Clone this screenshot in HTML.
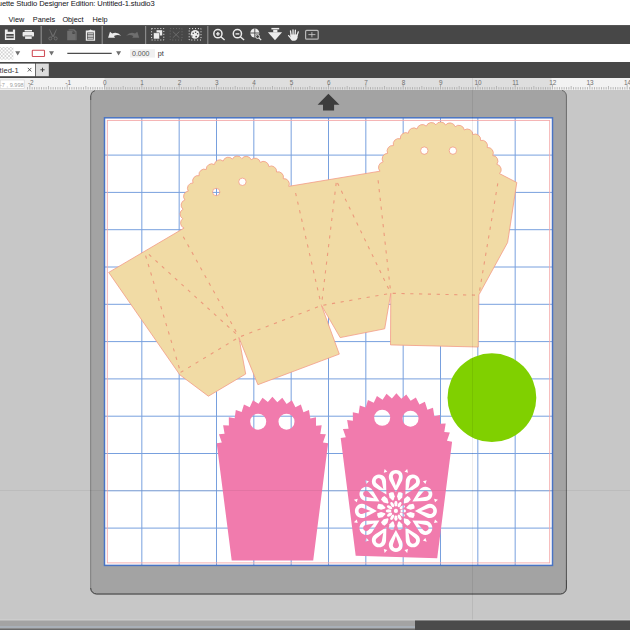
<!DOCTYPE html>
<html><head><meta charset="utf-8">
<style>
html,body{margin:0;padding:0;}
body{width:630px;height:630px;overflow:hidden;position:relative;background:#c7c7c7;font-family:"Liberation Sans",sans-serif;}
.a{position:absolute;}
#title{left:0;top:0;width:630px;height:12px;background:#fff;}
#title span{position:absolute;left:-2.2px;top:-1.5px;font-size:7.6px;letter-spacing:-0.1px;color:#141420;white-space:nowrap;}
#menu{left:0;top:12px;width:630px;height:13px;background:#fff;}
#menu span{position:absolute;top:2.6px;font-size:7.3px;color:#141420;white-space:nowrap;}
#tb{left:0;top:25px;width:630px;height:19px;background:#474747;}
#props{left:0;top:44px;width:630px;height:18px;background:#fff;}
#tabs{left:0;top:62px;width:630px;height:16px;background:#474747;}
#ruler{left:0;top:78px;width:630px;height:12px;background:#f2f2f2;}
#bottom{left:0;top:620px;width:630px;height:10px;background:#4b4b4b;}
svg{position:absolute;left:0;top:0;}
</style></head><body>
<div class="a" id="title"><span>uette Studio Designer Edition: Untitled-1.studio3</span></div>
<div class="a" id="menu"><span style="left:8.6px">View</span><span style="left:32.8px">Panels</span><span style="left:62.4px">Object</span><span style="left:92.6px">Help</span></div>
<div class="a" id="tb"></div>
<div class="a" id="props"></div>
<div class="a" id="tabs"></div>
<div class="a" id="ruler"></div>
<div class="a" id="bottom"></div>

<svg width="630" height="630" viewBox="0 0 630 630">
 <defs>
  <pattern id="chk" width="3.6" height="3.6" patternUnits="userSpaceOnUse" x="0" y="47">
   <rect width="3.6" height="3.6" fill="#fff"/><path d="M0 0L3.6 3.6M3.6 0L0 3.6" stroke="#c8c8c8" stroke-width="0.7"/>
  </pattern>
  <mask id="tanm" maskUnits="userSpaceOnUse" x="0" y="0" width="630" height="630"><rect width="630" height="630" fill="#fff"/><circle cx="242.4" cy="181.8" r="3.7" fill="#000"/><circle cx="216.2" cy="192" r="3.7" fill="#000"/><circle cx="424.3" cy="150.6" r="3.7" fill="#000"/><circle cx="452.9" cy="150.6" r="3.7" fill="#000"/></mask>
  <mask id="pkm" maskUnits="userSpaceOnUse" x="0" y="0" width="630" height="630"><rect width="630" height="630" fill="#fff"/><circle cx="258.2" cy="421.7" r="8" fill="#000"/><circle cx="286.5" cy="421.7" r="8" fill="#000"/><circle cx="382.2" cy="417.73" r="8" fill="#000"/><circle cx="410.5" cy="418.67" r="8" fill="#000"/><path d="M395.9 491.9 L402.14 480.38 A7.1 7.1 0 1 0 389.66 480.38 Z" fill="#000"/><path d="M407.16 468.88 l0.83 3.85 l-3.48 -0.93 Z" fill="#000"/><path d="M398.19 500.14 L397.06 496.15 L398.35 492.26 L400.87 492.35 L403.09 493.53 L402.27 497.54 L399.3 500.44Z" fill="#000"/><path d="M395.9 506.5 A2.9 1.6 -90 0 1 395.9 500.7 A2.9 1.6 -90 0 1 395.9 506.5 Z" fill="#000"/><path d="M405.4 494.45 L416.56 487.59 A7.1 7.1 0 1 0 405.75 481.35 Z" fill="#000"/><path d="M426.66 480.14 l-1.2 3.75 l-2.55 -2.55 Z" fill="#000"/><path d="M403.26 502.73 L404.28 498.7 L407.34 495.98 L409.48 497.32 L410.82 499.46 L408.1 502.52 L404.07 503.54Z" fill="#000"/><path d="M398.1 507.09 A2.9 1.6 -60 0 1 401 502.07 A2.9 1.6 -60 0 1 398.1 507.09 Z" fill="#000"/><path d="M412.35 501.4 L425.45 501.05 A7.1 7.1 0 1 0 419.21 490.24 Z" fill="#000"/><path d="M437.92 499.64 l-2.91 2.64 l-0.93 -3.48 Z" fill="#000"/><path d="M406.36 507.5 L409.26 504.53 L413.27 503.71 L414.45 505.93 L414.54 508.45 L410.65 509.74 L406.66 508.61Z" fill="#000"/><path d="M399.71 508.7 A2.9 1.6 -30 0 1 404.73 505.8 A2.9 1.6 -30 0 1 399.71 508.7 Z" fill="#000"/><path d="M414.9 510.9 L426.42 517.14 A7.1 7.1 0 1 0 426.42 504.66 Z" fill="#000"/><path d="M437.92 522.16 l-3.85 0.83 l0.93 -3.48 Z" fill="#000"/><path d="M406.66 513.19 L410.65 512.06 L414.54 513.35 L414.45 515.87 L413.27 518.09 L409.26 517.27 L406.36 514.3Z" fill="#000"/><path d="M400.3 510.9 A2.9 1.6 0 0 1 406.1 510.9 A2.9 1.6 0 0 1 400.3 510.9 Z" fill="#000"/><path d="M412.35 520.4 L419.21 531.56 A7.1 7.1 0 1 0 425.45 520.75 Z" fill="#000"/><path d="M426.66 541.66 l-3.75 -1.2 l2.55 -2.55 Z" fill="#000"/><path d="M404.07 518.26 L408.1 519.28 L410.82 522.34 L409.48 524.48 L407.34 525.82 L404.28 523.1 L403.26 519.07Z" fill="#000"/><path d="M399.71 513.1 A2.9 1.6 30 0 1 404.73 516 A2.9 1.6 30 0 1 399.71 513.1 Z" fill="#000"/><path d="M405.4 527.35 L405.75 540.45 A7.1 7.1 0 1 0 416.56 534.21 Z" fill="#000"/><path d="M407.16 552.92 l-2.64 -2.91 l3.48 -0.93 Z" fill="#000"/><path d="M399.3 521.36 L402.27 524.26 L403.09 528.27 L400.87 529.45 L398.35 529.54 L397.06 525.65 L398.19 521.66Z" fill="#000"/><path d="M398.1 514.71 A2.9 1.6 60 0 1 401 519.73 A2.9 1.6 60 0 1 398.1 514.71 Z" fill="#000"/><path d="M395.9 529.9 L389.66 541.42 A7.1 7.1 0 1 0 402.14 541.42 Z" fill="#000"/><path d="M384.64 552.92 l-0.83 -3.85 l3.48 0.93 Z" fill="#000"/><path d="M393.61 521.66 L394.74 525.65 L393.45 529.54 L390.93 529.45 L388.71 528.27 L389.53 524.26 L392.5 521.36Z" fill="#000"/><path d="M395.9 515.3 A2.9 1.6 90 0 1 395.9 521.1 A2.9 1.6 90 0 1 395.9 515.3 Z" fill="#000"/><path d="M386.4 527.35 L375.24 534.21 A7.1 7.1 0 1 0 386.05 540.45 Z" fill="#000"/><path d="M365.14 541.66 l1.2 -3.75 l2.55 2.55 Z" fill="#000"/><path d="M388.54 519.07 L387.52 523.1 L384.46 525.82 L382.32 524.48 L380.98 522.34 L383.7 519.28 L387.73 518.26Z" fill="#000"/><path d="M393.7 514.71 A2.9 1.6 120 0 1 390.8 519.73 A2.9 1.6 120 0 1 393.7 514.71 Z" fill="#000"/><path d="M379.45 520.4 L366.35 520.75 A7.1 7.1 0 1 0 372.59 531.56 Z" fill="#000"/><path d="M353.88 522.16 l2.91 -2.64 l0.93 3.48 Z" fill="#000"/><path d="M385.44 514.3 L382.54 517.27 L378.53 518.09 L377.35 515.87 L377.26 513.35 L381.15 512.06 L385.14 513.19Z" fill="#000"/><path d="M392.09 513.1 A2.9 1.6 150 0 1 387.07 516 A2.9 1.6 150 0 1 392.09 513.1 Z" fill="#000"/><path d="M376.9 510.9 L365.38 504.66 A7.1 7.1 0 1 0 365.38 517.14 Z" fill="#000"/><path d="M353.88 499.64 l3.85 -0.83 l-0.93 3.48 Z" fill="#000"/><path d="M385.14 508.61 L381.15 509.74 L377.26 508.45 L377.35 505.93 L378.53 503.71 L382.54 504.53 L385.44 507.5Z" fill="#000"/><path d="M391.5 510.9 A2.9 1.6 180 0 1 385.7 510.9 A2.9 1.6 180 0 1 391.5 510.9 Z" fill="#000"/><path d="M379.45 501.4 L372.59 490.24 A7.1 7.1 0 1 0 366.35 501.05 Z" fill="#000"/><path d="M365.14 480.14 l3.75 1.2 l-2.55 2.55 Z" fill="#000"/><path d="M387.73 503.54 L383.7 502.52 L380.98 499.46 L382.32 497.32 L384.46 495.98 L387.52 498.7 L388.54 502.73Z" fill="#000"/><path d="M392.09 508.7 A2.9 1.6 210 0 1 387.07 505.8 A2.9 1.6 210 0 1 392.09 508.7 Z" fill="#000"/><path d="M386.4 494.45 L386.05 481.35 A7.1 7.1 0 1 0 375.24 487.59 Z" fill="#000"/><path d="M384.64 468.88 l2.64 2.91 l-3.48 0.93 Z" fill="#000"/><path d="M392.5 500.44 L389.53 497.54 L388.71 493.53 L390.93 492.35 L393.45 492.26 L394.74 496.15 L393.61 500.14Z" fill="#000"/><path d="M393.7 507.09 A2.9 1.6 240 0 1 390.8 502.07 A2.9 1.6 240 0 1 393.7 507.09 Z" fill="#000"/><path d="M395.9 510.9 m-2.1 0 a2.1 2.1 0 1 0 4.2 0 a2.1 2.1 0 1 0 -4.2 0Z" fill="#000"/><path d="M395.9 485.7 L398.81 477.66 A3.1 3.1 0 1 0 392.99 477.66 Z" fill="#fff"/><path d="M408.5 489.08 L415.05 483.57 A3.1 3.1 0 1 0 410 480.65 Z" fill="#fff"/><path d="M417.72 498.3 L426.15 496.8 A3.1 3.1 0 1 0 423.23 491.75 Z" fill="#fff"/><path d="M421.1 510.9 L429.14 513.81 A3.1 3.1 0 1 0 429.14 507.99 Z" fill="#fff"/><path d="M417.72 523.5 L423.23 530.05 A3.1 3.1 0 1 0 426.15 525 Z" fill="#fff"/><path d="M408.5 532.72 L410 541.15 A3.1 3.1 0 1 0 415.05 538.23 Z" fill="#fff"/><path d="M395.9 536.1 L392.99 544.14 A3.1 3.1 0 1 0 398.81 544.14 Z" fill="#fff"/><path d="M383.3 532.72 L376.75 538.23 A3.1 3.1 0 1 0 381.8 541.15 Z" fill="#fff"/><path d="M374.08 523.5 L365.65 525 A3.1 3.1 0 1 0 368.57 530.05 Z" fill="#fff"/><path d="M370.7 510.9 L362.66 507.99 A3.1 3.1 0 1 0 362.66 513.81 Z" fill="#fff"/><path d="M374.08 498.3 L368.57 491.75 A3.1 3.1 0 1 0 365.65 496.8 Z" fill="#fff"/><path d="M383.3 489.08 L381.8 480.65 A3.1 3.1 0 1 0 376.75 483.57 Z" fill="#fff"/></mask>
  <linearGradient id="redge" x1="0" y1="0" x2="0" y2="1"><stop offset="0" stop-color="#6a6a6a"/><stop offset="0.5" stop-color="#7c7c7c"/><stop offset="1" stop-color="#505050"/></linearGradient>
 </defs>

 <!-- toolbar separators -->
 <g fill="#8a8a8a">
  <rect x="40.6" y="25" width="1.2" height="19"/>
  <rect x="101.6" y="25" width="1.2" height="19"/>
  <rect x="145" y="25" width="1.2" height="19"/>
  <rect x="207.2" y="25" width="1.2" height="19"/>
 </g>
 <!-- toolbar icons -->
 <rect x="0" y="25" width="630" height="1" fill="#555"/>
 <g fill="#ececec" stroke="none">
  <!-- save -->
  <path fill-rule="evenodd" d="M4.9 29.6h10.2v10.4H4.9z M7.7 29.6v2.1h5.2v-2.1z M6.3 34v4.3h7.4V34z"/>
  <rect x="6.3" y="35.7" width="7.4" height="0.9"/>
  <!-- printer -->
  <rect x="24.6" y="30" width="7.4" height="1.5"/>
  <rect x="22.6" y="32" width="11.4" height="4.6" rx="0.8"/>
  <rect x="24.4" y="35.6" width="7.8" height="0.8" fill="#474747"/>
  <rect x="25.1" y="36.4" width="6.6" height="2.5"/>
 </g>
 <g fill="#6e6e6e" stroke="none">
  <!-- scissors -->
  <path d="M49.8 29.2 L53 35.4 L56.2 29.2 L56.8 29.6 L54 36.4 L55.4 37 L54.6 37.6 L53 36.4 L51.4 37.6 L50.6 37 L52 36.4 L49.2 29.6Z"/>
  <circle cx="50.3" cy="38.5" r="1.5" fill="none" stroke="#6e6e6e" stroke-width="1"/>
  <circle cx="55.7" cy="38.5" r="1.5" fill="none" stroke="#6e6e6e" stroke-width="1"/>
  <!-- copy doc -->
  <path d="M68.6 29.2h5.6l2.4 2.4v8.6h-1.2v-7.8l-2-2h-4.8z"/>
  <path d="M67.2 30.8h5.4l3 3v6.4h-8.4z"/>
  <path d="M72.4 31.2v2.8h2.8z" fill="#474747"/>
  <!-- redo -->
  <path d="M139.2 37.8 L137.3 31.8 L135.1 33.6 Q130.3 31.4 126.1 35.8 Q129.8 34.2 133.3 36 L132.3 37.8 Z"/>
  <!-- ungroup -->
  <path d="M172.8 31.6 L179.4 37.8 M179.4 31.6 L172.8 37.8" stroke="#6e6e6e" stroke-width="0.9" fill="none"/>
  <rect x="170.2" y="28.6" width="11.8" height="11.4" fill="none" stroke="#6e6e6e" stroke-width="1" stroke-dasharray="1 1.9"/>
 </g>
 <g fill="#ececec">
  <!-- clipboard -->
  <path fill-rule="evenodd" d="M85.8 30.6h9.3v10.1h-9.3z M87 32.6v6.8h6.9v-6.8z"/>
  <path d="M88.6 31.4 v-1.2 h1.2 a0.8 0.8 0 0 1 1.6 0 h1.2 v1.2z"/>
  <rect x="87.6" y="33.3" width="5.8" height="0.9"/><rect x="87.6" y="34.8" width="5.8" height="0.9"/><rect x="87.6" y="36.3" width="5.8" height="0.9"/><rect x="87.6" y="37.8" width="5.8" height="0.9"/>
  <!-- undo -->
  <path d="M108.1 37.8 L110 31.8 L112.2 33.6 Q117 31.4 121.2 35.8 Q117.5 34.2 114 36 L115 37.8 Z"/>
  <!-- group -->
  <rect x="151.6" y="28.6" width="12.2" height="11.4" fill="none" stroke="#ececec" stroke-width="1" stroke-dasharray="1 1.9"/>
  <rect x="156.5" y="30.2" width="5.7" height="5.3"/>
  <rect x="153.4" y="32.8" width="6.2" height="6.2" stroke="#474747" stroke-width="0.6"/>
  <!-- palette -->
  <rect x="189.2" y="28.6" width="11.8" height="11.4" fill="none" stroke="#ececec" stroke-width="1" stroke-dasharray="1 1.9"/>
  <circle cx="195.1" cy="34.4" r="4.4"/>
  <circle cx="193.2" cy="33.2" r="0.8" fill="#474747"/><circle cx="195.6" cy="32.2" r="0.8" fill="#474747"/><circle cx="197.6" cy="33.8" r="0.8" fill="#474747"/><circle cx="196.2" cy="36.6" r="0.9" fill="#474747"/>
  <path d="M190.6 35.8 l1.8 -0.6 l-0.2 2.4z" fill="#474747"/>
  <!-- zoom in -->
  <circle cx="217.9" cy="33.7" r="4.1" fill="none" stroke="#ececec" stroke-width="1.5"/>
  <path d="M220.8 36.8 L224.6 40" stroke="#ececec" stroke-width="1.4"/>
  <path d="M216 33.2h3.8v1.4h-3.8z M217.2 32h1.4v3.8h-1.4z"/>
  <!-- zoom out -->
  <circle cx="237.4" cy="33.7" r="4.1" fill="none" stroke="#ececec" stroke-width="1.5"/>
  <path d="M240.3 36.8 L244.1 40" stroke="#ececec" stroke-width="1.4"/>
  <path d="M235.5 33.2h3.8v1.4h-3.8z"/>
  <!-- zoom fit -->
  <circle cx="254.8" cy="33" r="4.5"/>
  <path d="M254.8 28.4 v9.2 M250.2 33 h9.2" stroke="#474747" stroke-width="0.9"/>
  <circle cx="257.6" cy="36.6" r="2.5" fill="#474747"/>
  <circle cx="257.6" cy="36.6" r="1.9" fill="none" stroke="#ececec" stroke-width="0.9"/>
  <path d="M259 38 L261.2 40" stroke="#ececec" stroke-width="1.1"/>
  <!-- down arrow -->
  <rect x="271.4" y="27.9" width="7.8" height="1.5"/>
  <rect x="273.2" y="29.8" width="4.2" height="2.6"/>
  <path d="M267.9 32.2 H282.1 L275 40.2Z"/>
  <!-- hand -->
  <path d="M290.4 34.6 H297.6 V37.6 Q297 40.6 294.4 40.8 H292.2 Q290.6 40 290.4 38Z"/>
  <g stroke="#ececec" stroke-width="1.3" stroke-linecap="round" fill="none">
   <path d="M291.1 35.4 L290.5 31"/><path d="M293.1 35 L293 29.8"/><path d="M295.1 35 L295.4 30.2"/><path d="M297 35.6 L298.3 31.8"/><path d="M291 38.2 L288.6 35.6"/>
  </g>
  <!-- box cross -->
  <rect x="305.6" y="30.4" width="12.6" height="8.8" rx="1" fill="none" stroke="#b8b8b8" stroke-width="1.2"/>
  <path d="M308.4 34.6h7 M311.9 32.1v5.2" stroke="#d0d0d0" stroke-width="0.8"/>
 </g>

 <!-- props bar -->
 <rect x="0" y="47" width="13.4" height="12.6" fill="url(#chk)"/>
 <path d="M15.2 51.2h5l-2.5 4.2z M49 51.2h5l-2.5 4.2z M116.1 51.2h5l-2.5 4.2z" fill="#707070"/>
 <rect x="32.3" y="50.3" width="12.2" height="6.2" rx="0.6" fill="#fff" stroke="#d0505a" stroke-width="1.1"/>
 <rect x="67.3" y="52.8" width="44.4" height="1" fill="#222"/>
 <rect x="130" y="49.2" width="25" height="8.4" fill="#f0f0f0"/>
 <text x="132" y="56.4" font-size="7" fill="#555" font-family="Liberation Sans">0.000</text>
 <text x="157.8" y="56.4" font-size="7.2" fill="#333" font-family="Liberation Sans">pt</text>

 <!-- tabs -->
 <rect x="0" y="63.6" width="35.2" height="12.6" fill="#fff"/>
 <rect x="36" y="63.6" width="12.8" height="12.6" fill="#dcdcdc"/>
 <text x="-0.4" y="72.8" font-size="7.6" fill="#333" font-family="Liberation Sans">tled-1</text>
 <path d="M27.8 67.9l3.6 3.6M31.4 67.9l-3.6 3.6" stroke="#333" stroke-width="0.8"/>
 <path d="M40.4 69.8h4.2M42.5 67.7v4.2" stroke="#444" stroke-width="1"/>

 <!-- ruler -->
 <rect x="104.5" y="78" width="447" height="12" fill="#dedede"/>
 <rect x="0" y="86" width="630" height="4" fill="#e4e4e4" opacity="0.0"/>
 <rect x="0.2" y="80" width="24" height="8.4" fill="#fff" stroke="#d0d0d0" stroke-width="0.6"/>
 <text x="0" y="86.6" font-size="5.6" fill="#a0a0a0" font-family="Liberation Sans">-7 , 9.998</text>
 <g stroke="#a8a8a8" stroke-width="0.8"><line x1="27.5" y1="87.1" x2="27.5" y2="89.5"/><line x1="29.83" y1="84.5" x2="29.83" y2="89.5"/><line x1="32.17" y1="87.1" x2="32.17" y2="89.5"/><line x1="34.5" y1="87.1" x2="34.5" y2="89.5"/><line x1="36.83" y1="87.1" x2="36.83" y2="89.5"/><line x1="39.17" y1="87.1" x2="39.17" y2="89.5"/><line x1="41.5" y1="87.1" x2="41.5" y2="89.5"/><line x1="43.83" y1="87.1" x2="43.83" y2="89.5"/><line x1="46.17" y1="87.1" x2="46.17" y2="89.5"/><line x1="48.5" y1="86" x2="48.5" y2="89.5"/><line x1="50.83" y1="87.1" x2="50.83" y2="89.5"/><line x1="53.17" y1="87.1" x2="53.17" y2="89.5"/><line x1="55.5" y1="87.1" x2="55.5" y2="89.5"/><line x1="57.83" y1="87.1" x2="57.83" y2="89.5"/><line x1="60.17" y1="87.1" x2="60.17" y2="89.5"/><line x1="62.5" y1="87.1" x2="62.5" y2="89.5"/><line x1="64.83" y1="87.1" x2="64.83" y2="89.5"/><line x1="67.17" y1="84.5" x2="67.17" y2="89.5"/><line x1="69.5" y1="87.1" x2="69.5" y2="89.5"/><line x1="71.83" y1="87.1" x2="71.83" y2="89.5"/><line x1="74.17" y1="87.1" x2="74.17" y2="89.5"/><line x1="76.5" y1="87.1" x2="76.5" y2="89.5"/><line x1="78.83" y1="87.1" x2="78.83" y2="89.5"/><line x1="81.17" y1="87.1" x2="81.17" y2="89.5"/><line x1="83.5" y1="87.1" x2="83.5" y2="89.5"/><line x1="85.83" y1="86" x2="85.83" y2="89.5"/><line x1="88.17" y1="87.1" x2="88.17" y2="89.5"/><line x1="90.5" y1="87.1" x2="90.5" y2="89.5"/><line x1="92.83" y1="87.1" x2="92.83" y2="89.5"/><line x1="95.17" y1="87.1" x2="95.17" y2="89.5"/><line x1="97.5" y1="87.1" x2="97.5" y2="89.5"/><line x1="99.83" y1="87.1" x2="99.83" y2="89.5"/><line x1="102.17" y1="87.1" x2="102.17" y2="89.5"/><line x1="104.5" y1="84.5" x2="104.5" y2="89.5"/><line x1="106.83" y1="87.1" x2="106.83" y2="89.5"/><line x1="109.17" y1="87.1" x2="109.17" y2="89.5"/><line x1="111.5" y1="87.1" x2="111.5" y2="89.5"/><line x1="113.83" y1="87.1" x2="113.83" y2="89.5"/><line x1="116.17" y1="87.1" x2="116.17" y2="89.5"/><line x1="118.5" y1="87.1" x2="118.5" y2="89.5"/><line x1="120.83" y1="87.1" x2="120.83" y2="89.5"/><line x1="123.17" y1="86" x2="123.17" y2="89.5"/><line x1="125.5" y1="87.1" x2="125.5" y2="89.5"/><line x1="127.83" y1="87.1" x2="127.83" y2="89.5"/><line x1="130.17" y1="87.1" x2="130.17" y2="89.5"/><line x1="132.5" y1="87.1" x2="132.5" y2="89.5"/><line x1="134.83" y1="87.1" x2="134.83" y2="89.5"/><line x1="137.17" y1="87.1" x2="137.17" y2="89.5"/><line x1="139.5" y1="87.1" x2="139.5" y2="89.5"/><line x1="141.83" y1="84.5" x2="141.83" y2="89.5"/><line x1="144.17" y1="87.1" x2="144.17" y2="89.5"/><line x1="146.5" y1="87.1" x2="146.5" y2="89.5"/><line x1="148.83" y1="87.1" x2="148.83" y2="89.5"/><line x1="151.17" y1="87.1" x2="151.17" y2="89.5"/><line x1="153.5" y1="87.1" x2="153.5" y2="89.5"/><line x1="155.83" y1="87.1" x2="155.83" y2="89.5"/><line x1="158.17" y1="87.1" x2="158.17" y2="89.5"/><line x1="160.5" y1="86" x2="160.5" y2="89.5"/><line x1="162.83" y1="87.1" x2="162.83" y2="89.5"/><line x1="165.17" y1="87.1" x2="165.17" y2="89.5"/><line x1="167.5" y1="87.1" x2="167.5" y2="89.5"/><line x1="169.83" y1="87.1" x2="169.83" y2="89.5"/><line x1="172.17" y1="87.1" x2="172.17" y2="89.5"/><line x1="174.5" y1="87.1" x2="174.5" y2="89.5"/><line x1="176.83" y1="87.1" x2="176.83" y2="89.5"/><line x1="179.17" y1="84.5" x2="179.17" y2="89.5"/><line x1="181.5" y1="87.1" x2="181.5" y2="89.5"/><line x1="183.83" y1="87.1" x2="183.83" y2="89.5"/><line x1="186.17" y1="87.1" x2="186.17" y2="89.5"/><line x1="188.5" y1="87.1" x2="188.5" y2="89.5"/><line x1="190.83" y1="87.1" x2="190.83" y2="89.5"/><line x1="193.17" y1="87.1" x2="193.17" y2="89.5"/><line x1="195.5" y1="87.1" x2="195.5" y2="89.5"/><line x1="197.83" y1="86" x2="197.83" y2="89.5"/><line x1="200.17" y1="87.1" x2="200.17" y2="89.5"/><line x1="202.5" y1="87.1" x2="202.5" y2="89.5"/><line x1="204.83" y1="87.1" x2="204.83" y2="89.5"/><line x1="207.17" y1="87.1" x2="207.17" y2="89.5"/><line x1="209.5" y1="87.1" x2="209.5" y2="89.5"/><line x1="211.83" y1="87.1" x2="211.83" y2="89.5"/><line x1="214.17" y1="87.1" x2="214.17" y2="89.5"/><line x1="216.5" y1="84.5" x2="216.5" y2="89.5"/><line x1="218.83" y1="87.1" x2="218.83" y2="89.5"/><line x1="221.17" y1="87.1" x2="221.17" y2="89.5"/><line x1="223.5" y1="87.1" x2="223.5" y2="89.5"/><line x1="225.83" y1="87.1" x2="225.83" y2="89.5"/><line x1="228.17" y1="87.1" x2="228.17" y2="89.5"/><line x1="230.5" y1="87.1" x2="230.5" y2="89.5"/><line x1="232.83" y1="87.1" x2="232.83" y2="89.5"/><line x1="235.17" y1="86" x2="235.17" y2="89.5"/><line x1="237.5" y1="87.1" x2="237.5" y2="89.5"/><line x1="239.83" y1="87.1" x2="239.83" y2="89.5"/><line x1="242.17" y1="87.1" x2="242.17" y2="89.5"/><line x1="244.5" y1="87.1" x2="244.5" y2="89.5"/><line x1="246.83" y1="87.1" x2="246.83" y2="89.5"/><line x1="249.17" y1="87.1" x2="249.17" y2="89.5"/><line x1="251.5" y1="87.1" x2="251.5" y2="89.5"/><line x1="253.83" y1="84.5" x2="253.83" y2="89.5"/><line x1="256.17" y1="87.1" x2="256.17" y2="89.5"/><line x1="258.5" y1="87.1" x2="258.5" y2="89.5"/><line x1="260.83" y1="87.1" x2="260.83" y2="89.5"/><line x1="263.17" y1="87.1" x2="263.17" y2="89.5"/><line x1="265.5" y1="87.1" x2="265.5" y2="89.5"/><line x1="267.83" y1="87.1" x2="267.83" y2="89.5"/><line x1="270.17" y1="87.1" x2="270.17" y2="89.5"/><line x1="272.5" y1="86" x2="272.5" y2="89.5"/><line x1="274.83" y1="87.1" x2="274.83" y2="89.5"/><line x1="277.17" y1="87.1" x2="277.17" y2="89.5"/><line x1="279.5" y1="87.1" x2="279.5" y2="89.5"/><line x1="281.83" y1="87.1" x2="281.83" y2="89.5"/><line x1="284.17" y1="87.1" x2="284.17" y2="89.5"/><line x1="286.5" y1="87.1" x2="286.5" y2="89.5"/><line x1="288.83" y1="87.1" x2="288.83" y2="89.5"/><line x1="291.16" y1="84.5" x2="291.16" y2="89.5"/><line x1="293.5" y1="87.1" x2="293.5" y2="89.5"/><line x1="295.83" y1="87.1" x2="295.83" y2="89.5"/><line x1="298.16" y1="87.1" x2="298.16" y2="89.5"/><line x1="300.5" y1="87.1" x2="300.5" y2="89.5"/><line x1="302.83" y1="87.1" x2="302.83" y2="89.5"/><line x1="305.16" y1="87.1" x2="305.16" y2="89.5"/><line x1="307.5" y1="87.1" x2="307.5" y2="89.5"/><line x1="309.83" y1="86" x2="309.83" y2="89.5"/><line x1="312.16" y1="87.1" x2="312.16" y2="89.5"/><line x1="314.5" y1="87.1" x2="314.5" y2="89.5"/><line x1="316.83" y1="87.1" x2="316.83" y2="89.5"/><line x1="319.16" y1="87.1" x2="319.16" y2="89.5"/><line x1="321.5" y1="87.1" x2="321.5" y2="89.5"/><line x1="323.83" y1="87.1" x2="323.83" y2="89.5"/><line x1="326.16" y1="87.1" x2="326.16" y2="89.5"/><line x1="328.5" y1="84.5" x2="328.5" y2="89.5"/><line x1="330.83" y1="87.1" x2="330.83" y2="89.5"/><line x1="333.16" y1="87.1" x2="333.16" y2="89.5"/><line x1="335.5" y1="87.1" x2="335.5" y2="89.5"/><line x1="337.83" y1="87.1" x2="337.83" y2="89.5"/><line x1="340.16" y1="87.1" x2="340.16" y2="89.5"/><line x1="342.5" y1="87.1" x2="342.5" y2="89.5"/><line x1="344.83" y1="87.1" x2="344.83" y2="89.5"/><line x1="347.16" y1="86" x2="347.16" y2="89.5"/><line x1="349.5" y1="87.1" x2="349.5" y2="89.5"/><line x1="351.83" y1="87.1" x2="351.83" y2="89.5"/><line x1="354.16" y1="87.1" x2="354.16" y2="89.5"/><line x1="356.5" y1="87.1" x2="356.5" y2="89.5"/><line x1="358.83" y1="87.1" x2="358.83" y2="89.5"/><line x1="361.16" y1="87.1" x2="361.16" y2="89.5"/><line x1="363.5" y1="87.1" x2="363.5" y2="89.5"/><line x1="365.83" y1="84.5" x2="365.83" y2="89.5"/><line x1="368.16" y1="87.1" x2="368.16" y2="89.5"/><line x1="370.5" y1="87.1" x2="370.5" y2="89.5"/><line x1="372.83" y1="87.1" x2="372.83" y2="89.5"/><line x1="375.16" y1="87.1" x2="375.16" y2="89.5"/><line x1="377.5" y1="87.1" x2="377.5" y2="89.5"/><line x1="379.83" y1="87.1" x2="379.83" y2="89.5"/><line x1="382.16" y1="87.1" x2="382.16" y2="89.5"/><line x1="384.5" y1="86" x2="384.5" y2="89.5"/><line x1="386.83" y1="87.1" x2="386.83" y2="89.5"/><line x1="389.16" y1="87.1" x2="389.16" y2="89.5"/><line x1="391.5" y1="87.1" x2="391.5" y2="89.5"/><line x1="393.83" y1="87.1" x2="393.83" y2="89.5"/><line x1="396.16" y1="87.1" x2="396.16" y2="89.5"/><line x1="398.5" y1="87.1" x2="398.5" y2="89.5"/><line x1="400.83" y1="87.1" x2="400.83" y2="89.5"/><line x1="403.16" y1="84.5" x2="403.16" y2="89.5"/><line x1="405.5" y1="87.1" x2="405.5" y2="89.5"/><line x1="407.83" y1="87.1" x2="407.83" y2="89.5"/><line x1="410.16" y1="87.1" x2="410.16" y2="89.5"/><line x1="412.5" y1="87.1" x2="412.5" y2="89.5"/><line x1="414.83" y1="87.1" x2="414.83" y2="89.5"/><line x1="417.16" y1="87.1" x2="417.16" y2="89.5"/><line x1="419.5" y1="87.1" x2="419.5" y2="89.5"/><line x1="421.83" y1="86" x2="421.83" y2="89.5"/><line x1="424.16" y1="87.1" x2="424.16" y2="89.5"/><line x1="426.5" y1="87.1" x2="426.5" y2="89.5"/><line x1="428.83" y1="87.1" x2="428.83" y2="89.5"/><line x1="431.16" y1="87.1" x2="431.16" y2="89.5"/><line x1="433.5" y1="87.1" x2="433.5" y2="89.5"/><line x1="435.83" y1="87.1" x2="435.83" y2="89.5"/><line x1="438.16" y1="87.1" x2="438.16" y2="89.5"/><line x1="440.5" y1="84.5" x2="440.5" y2="89.5"/><line x1="442.83" y1="87.1" x2="442.83" y2="89.5"/><line x1="445.16" y1="87.1" x2="445.16" y2="89.5"/><line x1="447.5" y1="87.1" x2="447.5" y2="89.5"/><line x1="449.83" y1="87.1" x2="449.83" y2="89.5"/><line x1="452.16" y1="87.1" x2="452.16" y2="89.5"/><line x1="454.5" y1="87.1" x2="454.5" y2="89.5"/><line x1="456.83" y1="87.1" x2="456.83" y2="89.5"/><line x1="459.16" y1="86" x2="459.16" y2="89.5"/><line x1="461.5" y1="87.1" x2="461.5" y2="89.5"/><line x1="463.83" y1="87.1" x2="463.83" y2="89.5"/><line x1="466.16" y1="87.1" x2="466.16" y2="89.5"/><line x1="468.5" y1="87.1" x2="468.5" y2="89.5"/><line x1="470.83" y1="87.1" x2="470.83" y2="89.5"/><line x1="473.16" y1="87.1" x2="473.16" y2="89.5"/><line x1="475.5" y1="87.1" x2="475.5" y2="89.5"/><line x1="477.83" y1="84.5" x2="477.83" y2="89.5"/><line x1="480.16" y1="87.1" x2="480.16" y2="89.5"/><line x1="482.5" y1="87.1" x2="482.5" y2="89.5"/><line x1="484.83" y1="87.1" x2="484.83" y2="89.5"/><line x1="487.16" y1="87.1" x2="487.16" y2="89.5"/><line x1="489.5" y1="87.1" x2="489.5" y2="89.5"/><line x1="491.83" y1="87.1" x2="491.83" y2="89.5"/><line x1="494.16" y1="87.1" x2="494.16" y2="89.5"/><line x1="496.5" y1="86" x2="496.5" y2="89.5"/><line x1="498.83" y1="87.1" x2="498.83" y2="89.5"/><line x1="501.16" y1="87.1" x2="501.16" y2="89.5"/><line x1="503.5" y1="87.1" x2="503.5" y2="89.5"/><line x1="505.83" y1="87.1" x2="505.83" y2="89.5"/><line x1="508.16" y1="87.1" x2="508.16" y2="89.5"/><line x1="510.5" y1="87.1" x2="510.5" y2="89.5"/><line x1="512.83" y1="87.1" x2="512.83" y2="89.5"/><line x1="515.16" y1="84.5" x2="515.16" y2="89.5"/><line x1="517.5" y1="87.1" x2="517.5" y2="89.5"/><line x1="519.83" y1="87.1" x2="519.83" y2="89.5"/><line x1="522.16" y1="87.1" x2="522.16" y2="89.5"/><line x1="524.5" y1="87.1" x2="524.5" y2="89.5"/><line x1="526.83" y1="87.1" x2="526.83" y2="89.5"/><line x1="529.16" y1="87.1" x2="529.16" y2="89.5"/><line x1="531.5" y1="87.1" x2="531.5" y2="89.5"/><line x1="533.83" y1="86" x2="533.83" y2="89.5"/><line x1="536.16" y1="87.1" x2="536.16" y2="89.5"/><line x1="538.5" y1="87.1" x2="538.5" y2="89.5"/><line x1="540.83" y1="87.1" x2="540.83" y2="89.5"/><line x1="543.16" y1="87.1" x2="543.16" y2="89.5"/><line x1="545.5" y1="87.1" x2="545.5" y2="89.5"/><line x1="547.83" y1="87.1" x2="547.83" y2="89.5"/><line x1="550.16" y1="87.1" x2="550.16" y2="89.5"/><line x1="552.5" y1="84.5" x2="552.5" y2="89.5"/><line x1="554.83" y1="87.1" x2="554.83" y2="89.5"/><line x1="557.16" y1="87.1" x2="557.16" y2="89.5"/><line x1="559.5" y1="87.1" x2="559.5" y2="89.5"/><line x1="561.83" y1="87.1" x2="561.83" y2="89.5"/><line x1="564.16" y1="87.1" x2="564.16" y2="89.5"/><line x1="566.5" y1="87.1" x2="566.5" y2="89.5"/><line x1="568.83" y1="87.1" x2="568.83" y2="89.5"/><line x1="571.16" y1="86" x2="571.16" y2="89.5"/><line x1="573.5" y1="87.1" x2="573.5" y2="89.5"/><line x1="575.83" y1="87.1" x2="575.83" y2="89.5"/><line x1="578.16" y1="87.1" x2="578.16" y2="89.5"/><line x1="580.5" y1="87.1" x2="580.5" y2="89.5"/><line x1="582.83" y1="87.1" x2="582.83" y2="89.5"/><line x1="585.16" y1="87.1" x2="585.16" y2="89.5"/><line x1="587.5" y1="87.1" x2="587.5" y2="89.5"/><line x1="589.83" y1="84.5" x2="589.83" y2="89.5"/><line x1="592.16" y1="87.1" x2="592.16" y2="89.5"/><line x1="594.5" y1="87.1" x2="594.5" y2="89.5"/><line x1="596.83" y1="87.1" x2="596.83" y2="89.5"/><line x1="599.16" y1="87.1" x2="599.16" y2="89.5"/><line x1="601.5" y1="87.1" x2="601.5" y2="89.5"/><line x1="603.83" y1="87.1" x2="603.83" y2="89.5"/><line x1="606.16" y1="87.1" x2="606.16" y2="89.5"/><line x1="608.5" y1="86" x2="608.5" y2="89.5"/><line x1="610.83" y1="87.1" x2="610.83" y2="89.5"/><line x1="613.16" y1="87.1" x2="613.16" y2="89.5"/><line x1="615.5" y1="87.1" x2="615.5" y2="89.5"/><line x1="617.83" y1="87.1" x2="617.83" y2="89.5"/><line x1="620.16" y1="87.1" x2="620.16" y2="89.5"/><line x1="622.5" y1="87.1" x2="622.5" y2="89.5"/><line x1="624.83" y1="87.1" x2="624.83" y2="89.5"/><line x1="627.16" y1="84.5" x2="627.16" y2="89.5"/><line x1="629.5" y1="87.1" x2="629.5" y2="89.5"/></g>
 <g font-size="6.4" fill="#707070" font-family="Liberation Sans"><text x="30.83" y="84.6" text-anchor="middle">-2</text><text x="68.17" y="84.6" text-anchor="middle">-1</text><text x="104.8" y="84.6" text-anchor="middle">0</text><text x="142.13" y="84.6" text-anchor="middle">1</text><text x="179.47" y="84.6" text-anchor="middle">2</text><text x="216.8" y="84.6" text-anchor="middle">3</text><text x="254.13" y="84.6" text-anchor="middle">4</text><text x="291.46" y="84.6" text-anchor="middle">5</text><text x="328.8" y="84.6" text-anchor="middle">6</text><text x="366.13" y="84.6" text-anchor="middle">7</text><text x="403.46" y="84.6" text-anchor="middle">8</text><text x="440.8" y="84.6" text-anchor="middle">9</text><text x="478.13" y="84.6" text-anchor="middle">10</text><text x="515.46" y="84.6" text-anchor="middle">11</text><text x="552.8" y="84.6" text-anchor="middle">12</text><text x="590.13" y="84.6" text-anchor="middle">13</text><text x="627.46" y="84.6" text-anchor="middle">14</text></g>

 <!-- mat -->
 <rect x="90.2" y="90" width="476.6" height="504.4" rx="6" fill="#a3a3a3"/>
 <path d="M90.7 96 V588" fill="none" stroke="#7a7a7a" stroke-width="0.9"/>
 <path d="M90.7 588 A6 6 0 0 0 96.7 594 H560.4 A6 6 0 0 0 566.4 588 V580" fill="none" stroke="#3c3c3c" stroke-width="1"/>
 <path d="M566.4 580.5 V96 A6 6 0 0 0 562 90.4" fill="none" stroke="url(#redge)" stroke-width="1"/>
 <path d="M90.7 100 V96 A6 6 0 0 1 95 90.6" fill="none" stroke="#555" stroke-width="0.9"/>
 <path d="M317.6 104.8 L328.4 93.7 L339.5 104.8 H334.1 V110.5 H323 V104.8Z" fill="#3c3c3c"/>

 <rect x="104.5" y="117.8" width="448" height="447.6" fill="#fff"/>
 <g stroke="#78a0de" stroke-width="1"><line x1="141.83" y1="117.8" x2="141.83" y2="565.4"/><line x1="179.17" y1="117.8" x2="179.17" y2="565.4"/><line x1="216.5" y1="117.8" x2="216.5" y2="565.4"/><line x1="253.83" y1="117.8" x2="253.83" y2="565.4"/><line x1="291.16" y1="117.8" x2="291.16" y2="565.4"/><line x1="328.5" y1="117.8" x2="328.5" y2="565.4"/><line x1="365.83" y1="117.8" x2="365.83" y2="565.4"/><line x1="403.16" y1="117.8" x2="403.16" y2="565.4"/><line x1="440.5" y1="117.8" x2="440.5" y2="565.4"/><line x1="477.83" y1="117.8" x2="477.83" y2="565.4"/><line x1="515.16" y1="117.8" x2="515.16" y2="565.4"/><line x1="104.5" y1="155.1" x2="552.5" y2="155.1"/><line x1="104.5" y1="192.4" x2="552.5" y2="192.4"/><line x1="104.5" y1="229.7" x2="552.5" y2="229.7"/><line x1="104.5" y1="267" x2="552.5" y2="267"/><line x1="104.5" y1="304.3" x2="552.5" y2="304.3"/><line x1="104.5" y1="341.6" x2="552.5" y2="341.6"/><line x1="104.5" y1="378.9" x2="552.5" y2="378.9"/><line x1="104.5" y1="416.2" x2="552.5" y2="416.2"/><line x1="104.5" y1="453.5" x2="552.5" y2="453.5"/><line x1="104.5" y1="490.8" x2="552.5" y2="490.8"/><line x1="104.5" y1="528.1" x2="552.5" y2="528.1"/></g>
 <rect x="107.3" y="120.4" width="442.4" height="442.5" fill="none" stroke="#f4a8a8" stroke-width="0.9"/>
 <rect x="104.5" y="117.8" width="448" height="447.6" fill="none" stroke="#4a74c4" stroke-width="1.5"/>

 <!-- tan -->
 <g mask="url(#tanm)">
  <path d="M108.7 272.4 L184.05 228.06 A5.35 5.35 0 0 1 182.78 218.68 A5.35 5.35 0 0 1 183.07 209.23 A5.35 5.35 0 0 1 184.92 199.95 A5.35 5.35 0 0 1 188.27 191.1 A5.35 5.35 0 0 1 193.04 182.93 A5.35 5.35 0 0 1 199.09 175.66 A5.35 5.35 0 0 1 206.26 169.49 A5.35 5.35 0 0 1 214.35 164.58 A5.35 5.35 0 0 1 223.14 161.08 A5.35 5.35 0 0 1 232.39 159.08 A5.35 5.35 0 0 1 241.84 158.64 A5.35 5.35 0 0 1 251.23 159.76 A5.35 5.35 0 0 1 260.31 162.41 A5.35 5.35 0 0 1 268.83 166.53 A5.35 5.35 0 0 1 276.55 172 A5.35 5.35 0 0 1 283.26 178.67 A5.35 5.35 0 0 1 288.78 186.35 L380.02 171.16 A5.48 5.48 0 0 1 383.11 161.96 A5.48 5.48 0 0 1 387.61 153.36 A5.48 5.48 0 0 1 393.41 145.58 A5.48 5.48 0 0 1 400.36 138.82 A5.48 5.48 0 0 1 408.3 133.23 A5.48 5.48 0 0 1 417.01 128.97 A5.48 5.48 0 0 1 426.29 126.14 A5.48 5.48 0 0 1 435.9 124.81 A5.48 5.48 0 0 1 445.6 125 A5.48 5.48 0 0 1 455.15 126.73 A5.48 5.48 0 0 1 464.31 129.94 A5.48 5.48 0 0 1 472.84 134.56 A5.48 5.48 0 0 1 480.54 140.46 A5.48 5.48 0 0 1 487.21 147.51 A5.48 5.48 0 0 1 492.68 155.52 A5.48 5.48 0 0 1 496.83 164.29 A5.48 5.48 0 0 1 499.53 173.61 L516.8 182.5 L507.6 242.5 L478.9 294.8 L478.2 347 L390.5 344.9 L390.8 293.3 L384.7 328.8 L340.2 337.6 L321.5 305.5 L339.3 354.1 L257.9 384.7 L238.9 337.5 L245.7 374 L208.4 396.2 L179.8 374.8 Z" fill="#f1dba5" stroke="#f29a86" stroke-width="0.8" stroke-linejoin="round"/>
 </g>
 <g fill="none" stroke="#f29a86" stroke-width="0.8"><circle cx="242.4" cy="181.8" r="3.7"/><circle cx="216.2" cy="192" r="3.7"/><circle cx="424.3" cy="150.6" r="3.7"/><circle cx="452.9" cy="150.6" r="3.7"/></g>
 <g fill="none" stroke="#ec9a7c" stroke-width="1.1" stroke-dasharray="3.2 5.6"><path d="M145.6 255.6 L180.6 372.4"/><path d="M148.9 254.4 L236.7 334.4"/><path d="M183.3 236.7 L238.9 336.7"/><path d="M180.6 372.4 L238.9 337.2 L321.5 305.5 L390.8 293.3 L478.9 295.2"/><path d="M295.6 193 L321.2 304.8"/><path d="M336.2 182.9 L321.5 304.8"/><path d="M337.5 182.9 L390.8 293.3"/><path d="M378.1 180.3 L390.8 293.3"/><path d="M497.8 183.3 L478.9 294.8"/></g>

 <!-- pink -->
 <g mask="url(#pkm)" fill="#f17bad">
  <path d="M216.7 443.3 L221.83 442.49 L218.93 434.24 L224.57 433.81 L223.12 425.25 L228.89 425.6 L228.81 417.13 L234.64 418.24 L235.83 410.11 L241.66 412.01 L243.95 404.42 L249.73 407.13 L252.94 400.23 L258.57 403.78 L262.52 397.66 L267.89 402.1 L272.4 396.8 L277.35 402.14 L282.28 397.66 L286.64 403.9 L291.86 400.23 L295.43 407.3 L300.85 404.42 L303.43 412.22 L308.97 410.11 L310.37 418.47 L315.99 417.13 L316.05 425.81 L321.68 425.25 L320.3 433.99 L325.87 434.24 L322.97 442.49 L328.1 443.3 L313.2 560.5 L231.7 560.5 Z"/>
  <path d="M340.7 437.95 L345.83 437.31 L342.93 428.97 L348.57 428.73 L347.12 420.12 L352.89 420.65 L352.81 412.18 L358.64 413.49 L359.83 405.4 L365.66 407.49 L367.95 399.98 L373.73 402.87 L376.94 396.09 L382.57 399.82 L386.52 393.84 L391.89 398.45 L396.4 393.3 L401.35 398.8 L406.28 394.49 L410.64 400.87 L415.86 397.38 L419.43 404.57 L424.85 401.87 L427.43 409.75 L432.97 407.83 L434.37 416.23 L439.99 415.07 L440.05 423.76 L445.68 423.38 L444.3 432.08 L449.87 432.51 L446.97 440.67 L452.1 441.65 L437.2 558.35 L355.7 555.65 Z"/>
 </g>

 <!-- green -->
 <circle cx="491.9" cy="397.7" r="44.4" fill="#80d000"/>

 <!-- guide -->
 <rect x="472.2" y="78" width="0.8" height="542" fill="#000" opacity="0.09"/>
 <rect x="0" y="490.2" width="630" height="0.8" fill="#000" opacity="0.07"/>

 <!-- bottom scrollbar -->
 <rect x="0" y="620" width="415" height="10" fill="#a3a3a3"/>
 <rect x="0" y="619.6" width="630" height="0.8" fill="#d8d8d8"/>
 <rect x="0" y="626" width="415" height="2" fill="#a9b0b8"/>
 <rect x="0" y="628.6" width="415" height="1.4" fill="#6a6a6a"/>
</svg>
</body></html>
